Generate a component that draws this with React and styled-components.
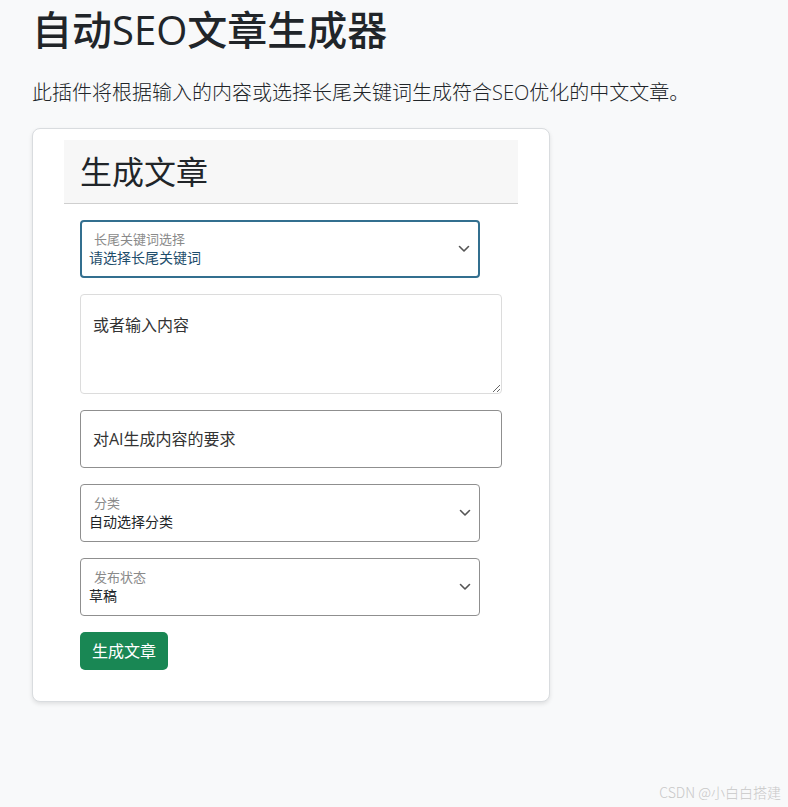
import React from "react";
import styled, { createGlobalStyle } from "styled-components";

const GlobalStyle = createGlobalStyle`
  html, body { margin: 0; padding: 0; }
  body {
    background: #f8f9fa;
    font-family: "Segoe UI", "Open Sans", "Noto Sans CJK SC", sans-serif;
    color: #212529;
    min-height: 807px;
  }
  * { box-sizing: border-box; }
`;

const Page = styled.div`
  padding: 6px 32px 32px 32px;
  min-height: 807px;
  position: relative;
`;

const Title = styled.h1`
  margin: 0 0 24px 0;
  font-size: 40px;
  line-height: 48px;
  font-weight: 500;
  color: #212529;
`;

const Lead = styled.p`
  margin: 0 0 20px 0;
  font-size: 20px;
  line-height: 30px;
  font-weight: 300;
  color: #212529;
`;

const Card = styled.div`
  width: 518px;
  background: #fff;
  border: 1px solid #d9dcdf;
  border-radius: 8px;
  box-shadow: 0 2px 4px rgba(0, 0, 0, 0.1);
  padding: 11px 31px 15px 31px;
`;

const CardHeader = styled.div`
  background: #f7f7f7;
  border-bottom: 1px solid #cfcfcf;
  height: 64px;
  padding: 0 16px;
  display: flex;
  align-items: center;
`;

const CardTitle = styled.h2`
  margin: 0;
  font-size: 32px;
  line-height: 38px;
  font-weight: 400;
  color: #212529;
`;

const Form = styled.form`
  padding: 16px;
  display: flex;
  flex-direction: column;
  gap: 16px;
  align-items: flex-start;
`;

const SelectBox = styled.div`
  position: relative;
  width: 400px;
  height: 58px;
  border: ${(p) => (p.$focused ? "2px solid #336f8f" : "1px solid #8f8f8f")};
  border-radius: 4px;
  background: #fff;
  padding: ${(p) => (p.$focused ? "8px 36px 0 7px" : "9px 36px 0 8px")};
  display: flex;
  flex-direction: column;
`;

const FloatLabel = styled.span`
  font-size: 13px;
  line-height: 18px;
  color: #8a8a8a;
  padding-left: 5px;
`;

const SelectValue = styled.span`
  font-size: 14px;
  line-height: 20px;
  color: ${(p) => (p.$focused ? "#1e4d6b" : "#212529")};
`;

const Chevron = styled.svg`
  position: absolute;
  right: 8px;
  top: 50%;
  transform: translateY(-50%);
`;

const TextArea = styled.textarea`
  width: 100%;
  height: 100px;
  border: 1px solid #dcdcdc;
  border-radius: 4px;
  padding: 18px 12px;
  font-family: inherit;
  font-size: 16px;
  line-height: 24px;
  color: #212529;
  resize: vertical;
  outline: none;
  &::placeholder { color: #333; opacity: 1; }
`;

const TextInput = styled.input`
  width: 100%;
  height: 58px;
  border: 1px solid #8f8f8f;
  border-radius: 4px;
  padding: 0 12px;
  font-family: inherit;
  font-size: 16px;
  color: #212529;
  outline: none;
  &::placeholder { color: #333; opacity: 1; }
`;

const Button = styled.button`
  height: 38px;
  padding: 0 12px;
  background: #198754;
  color: #fff;
  border: none;
  border-radius: 5px;
  font-family: inherit;
  font-size: 16px;
  line-height: 24px;
  cursor: pointer;
`;

const Watermark = styled.div`
  position: absolute;
  right: 7px;
  bottom: 5px;
  font-size: 14px;
  color: #c8c8c8;
  font-family: "Noto Sans CJK SC", sans-serif;
  font-weight: 300;
`;

function Select({ label, value, focused }) {
  return (
    <SelectBox $focused={focused}>
      <FloatLabel>{label}</FloatLabel>
      <SelectValue $focused={focused}>{value}</SelectValue>
      <Chevron width="12" height="8" viewBox="0 0 12 8">
        <polyline points="1.5,1.5 6,6 10.5,1.5" fill="none" stroke="#555" strokeWidth="1.6" strokeLinecap="round" strokeLinejoin="round" />
      </Chevron>
    </SelectBox>
  );
}

export default function App() {
  return (
    <>
      <GlobalStyle />
      <Page>
        <Title>自动SEO文章生成器</Title>
        <Lead>此插件将根据输入的内容或选择长尾关键词生成符合SEO优化的中文文章。</Lead>
        <Card>
          <CardHeader>
            <CardTitle>生成文章</CardTitle>
          </CardHeader>
          <Form onSubmit={(e) => e.preventDefault()}>
            <Select label="长尾关键词选择" value="请选择长尾关键词" focused />
            <TextArea placeholder="或者输入内容" />
            <TextInput placeholder="对AI生成内容的要求" />
            <Select label="分类" value="自动选择分类" />
            <Select label="发布状态" value="草稿" />
            <Button type="submit">生成文章</Button>
          </Form>
        </Card>
        <Watermark>CSDN @小白白搭建</Watermark>
      </Page>
    </>
  );
}
